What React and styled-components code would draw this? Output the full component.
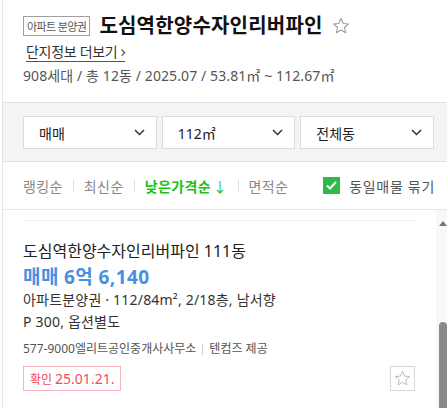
import React from "react";
import styled, { createGlobalStyle } from "styled-components";

const GlobalStyle = createGlobalStyle`
  html, body {
    margin: 0;
    padding: 0;
    background: #fff;
    font-family: "Noto Sans", "Noto Sans CJK KR", sans-serif;
    color: #222;
  }
`;

function Chevron() {
  return (
    <svg width="11" height="7" viewBox="0 0 11 7">
      <polyline points="1,1 5.5,5.5 10,1" fill="none" stroke="#333" strokeWidth="1.5" />
    </svg>
  );
}

function Star({ size = 16, color = "#aaa" }) {
  return (
    <svg width={size} height={size} viewBox="0 0 24 24">
      <polygon
        points="12,2 14.9,8.6 22,9.3 16.6,14 18.2,21 12,17.3 5.8,21 7.4,14 2,9.3 9.1,8.6"
        fill="none"
        stroke={color}
        strokeWidth="1.4"
        strokeLinejoin="round"
      />
    </svg>
  );
}

function App() {
  const filters = ["매매", "112㎡", "전체동"];
  const sorts = [
    { id: 1, label: "랭킹순" },
    { id: 2, label: "최신순" },
    { id: 3, label: "낮은가격순", active: true },
    { id: 4, label: "면적순" },
  ];

  return (
    <Panel>
      <GlobalStyle />
      <Header>
        <TitleRow>
          <TypeTag>아파트 분양권</TypeTag>
          <Title>도심역한양수자인리버파인</Title>
          <Star size={18} color="#999" />
        </TitleRow>
        <MoreLink>단지정보 더보기<span>›</span></MoreLink>
        <Summary>908세대 / 총 12동 / 2025.07 / 53.81㎡ ~ 112.67㎡</Summary>
      </Header>

      <FilterBar>
        {filters.map((f) => (
          <SelectBox key={f}>
            <span>{f}</span>
            <Chevron />
          </SelectBox>
        ))}
      </FilterBar>

      <SortBar>
        {sorts.map((s, i) => (
          <React.Fragment key={s.id}>
            {i > 0 && <Divider />}
            <SortItem $active={s.active}>
              {s.label}
              {s.active && <Arrow>↓</Arrow>}
            </SortItem>
          </React.Fragment>
        ))}
        <Grouping>
          <CheckBox>
            <svg width="11" height="9" viewBox="0 0 11 9">
              <polyline points="1,4.5 4,7.5 10,1" fill="none" stroke="#fff" strokeWidth="2" />
            </svg>
          </CheckBox>
          동일매물 묶기
        </Grouping>
      </SortBar>

      <ListArea>
        <List>
          <Item>
            <ItemTitle>도심역한양수자인리버파인 111동</ItemTitle>
            <Price>매매 6억 6,140</Price>
            <Spec>아파트분양권 · 112/84m², 2/18층, 남서향</Spec>
            <Spec>P 300, 옵션별도</Spec>
            <Agent>
              577-9000엘리트공인중개사사무소
              <SmallDivider />
              텐컴즈 제공
            </Agent>
            <BottomRow>
              <ConfirmTag>
                <small>확인</small> 25.01.21.
              </ConfirmTag>
              <StarButton>
                <Star size={17} color="#bbb" />
              </StarButton>
            </BottomRow>
          </Item>
        </List>
        <ScrollTrack>
          <ScrollArrow />
          <ScrollThumb />
        </ScrollTrack>
      </ListArea>
    </Panel>
  );
}

export default App;

const Panel = styled.div`
  width: 447px;
  height: 408px;
  box-sizing: border-box;
  margin-left: 2px;
  border-left: 1px solid #e5e5e5;
  overflow: hidden;
  display: flex;
  flex-direction: column;
`;

const Header = styled.div`
  padding: 14px 15px 0 20px;
  height: 103px;
  box-sizing: border-box;
  border-bottom: 1px solid #e2e2e2;
`;

const TitleRow = styled.div`
  display: flex;
  align-items: center;
  height: 24px;
`;

const TypeTag = styled.span`
  display: inline-flex;
  align-items: center;
  height: 20px;
  box-sizing: border-box;
  padding: 0 3px;
  border: 1px solid #a0a0a0;
  font-size: 11px;
  color: #555;
  letter-spacing: -0.6px;
  margin-right: 9px;
`;

const Title = styled.h1`
  margin: 0 9px 0 0;
  font-size: 20px;
  font-weight: 700;
  letter-spacing: 0.2px;
  color: #111;
  line-height: 24px;
`;

const MoreLink = styled.a`
  display: inline-block;
  margin: 4px 0 0 3px;
  font-size: 14px;
  line-height: 19px;
  color: #333;
  letter-spacing: -0.3px;
  border-bottom: 1px solid #555;

  span {
    margin-left: 3px;
    font-size: 17px;
    line-height: 17px;
    color: #555;
  }
`;

const Summary = styled.div`
  margin-top: 4px;
  font-size: 14px;
  line-height: 20px;
  color: #555;
  letter-spacing: 0.1px;
`;

const FilterBar = styled.div`
  display: grid;
  grid-template-columns: repeat(3, 1fr);
  gap: 5px;
  padding: 13px 15px 12px 20px;
  background: #f4f4f4;
  border-bottom: 1px solid #e2e2e2;
`;

const SelectBox = styled.div`
  display: flex;
  align-items: center;
  justify-content: space-between;
  height: 33px;
  box-sizing: border-box;
  padding: 0 11px 0 15px;
  background: #fff;
  border: 1px solid #dcdcdc;
  font-size: 14px;
  color: #222;
`;

const SortBar = styled.div`
  display: flex;
  align-items: center;
  height: 47px;
  padding: 0 14px 0 20px;
  border-bottom: 1px solid #e6e6e6;
`;

const SortItem = styled.span`
  font-size: 14px;
  letter-spacing: 0.4px;
  color: ${(p) => (p.$active ? "#19c219" : "#888")};
  font-weight: ${(p) => (p.$active ? 700 : 400)};
`;

const Arrow = styled.span`
  margin-left: 2px;
  font-weight: 400;
`;

const Divider = styled.i`
  width: 1px;
  height: 12px;
  background: #ddd;
  margin: 0 10px;
`;

const Grouping = styled.label`
  margin-left: auto;
  display: flex;
  align-items: center;
  font-size: 14px;
  color: #555;
  letter-spacing: 0.7px;
`;

const CheckBox = styled.span`
  display: inline-flex;
  align-items: center;
  justify-content: center;
  width: 17px;
  height: 17px;
  background: #2fba47;
  margin-right: 9px;
`;

const ListArea = styled.div`
  flex: 1;
  display: flex;
  min-height: 0;
`;

const List = styled.div`
  flex: 1;
  padding: 10px 19px 0 20px;
`;

const Item = styled.div`
  border-top: 1px solid #eee;
  padding-top: 19px;
`;

const ItemTitle = styled.div`
  font-size: 16px;
  line-height: 22px;
  color: #222;
`;

const Price = styled.div`
  margin-top: 3px;
  font-size: 19px;
  line-height: 24px;
  font-weight: 700;
  color: #4a90e2;
  letter-spacing: 0.4px;
`;

const Spec = styled.div`
  font-size: 14px;
  line-height: 22px;
  color: #333;
  letter-spacing: 0.2px;
`;

const Agent = styled.div`
  display: flex;
  align-items: center;
  margin-top: 7px;
  font-size: 12px;
  line-height: 18px;
  color: #555;
`;

const SmallDivider = styled.i`
  width: 1px;
  height: 11px;
  background: #ccc;
  margin: 0 6px;
`;

const BottomRow = styled.div`
  display: flex;
  justify-content: space-between;
  align-items: center;
  margin-top: 8px;
  padding-right: 2px;
`;

const ConfirmTag = styled.span`
  display: inline-flex;
  align-items: center;
  height: 25px;
  box-sizing: border-box;
  padding: 0 6px;
  border: 1px solid #f6b5bd;
  font-size: 14px;
  color: #f04a5e;

  small {
    font-size: 12px;
    margin-right: 3px;
  }
`;

const StarButton = styled.button`
  display: flex;
  align-items: center;
  justify-content: center;
  width: 25px;
  height: 25px;
  padding: 0;
  background: #fff;
  border: 1px solid #d8d8d8;
`;

const ScrollTrack = styled.div`
  width: 13px;
  background: #f8f8f8;
  display: flex;
  flex-direction: column;
  align-items: center;
`;

const ScrollArrow = styled.div`
  margin-top: 11px;
  width: 0;
  height: 0;
  border-left: 4px solid transparent;
  border-right: 4px solid transparent;
  border-bottom: 5px solid #777;
`;

const ScrollThumb = styled.div`
  margin-top: 96px;
  width: 8px;
  flex: 1;
  border-radius: 4px 4px 0 0;
  background: #888;
`;
